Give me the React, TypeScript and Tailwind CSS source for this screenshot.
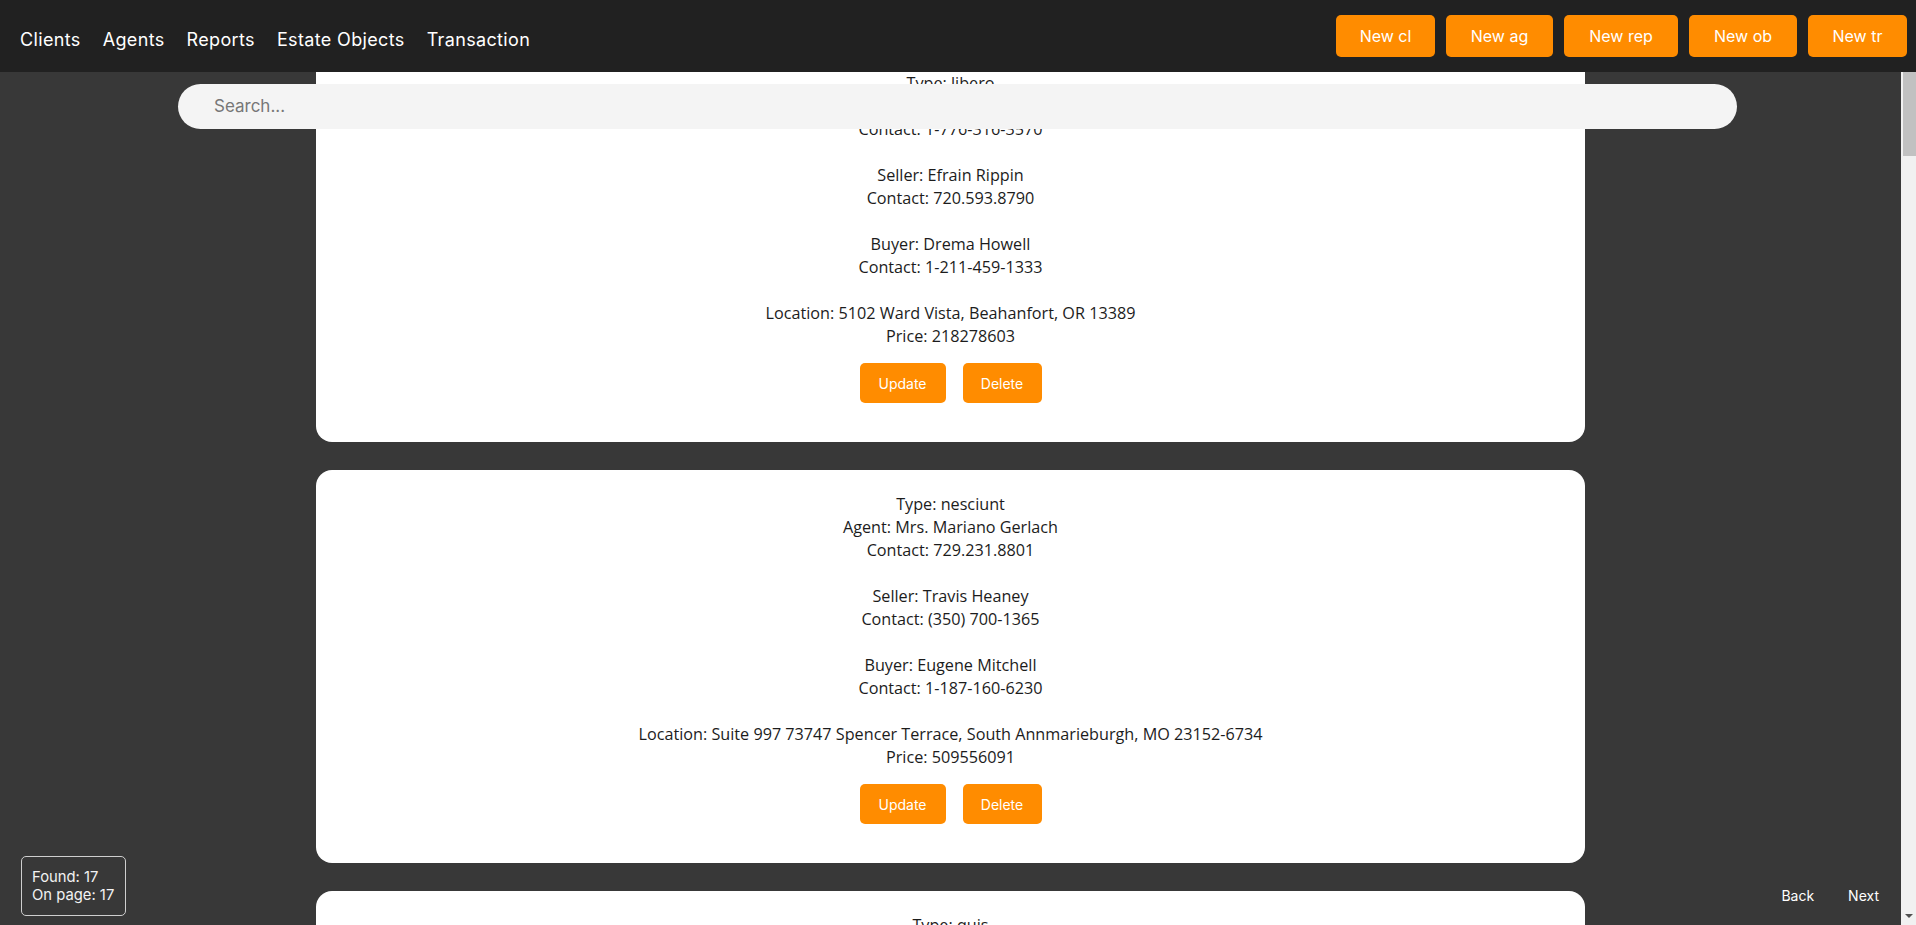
import React, { useLayoutEffect, useRef } from 'react';

type Deal = {
  type: string;
  agent: string;
  agentContact: string;
  seller: string;
  sellerContact: string;
  buyer: string;
  buyerContact: string;
  location: string;
  price: string;
};

const baseDeals: Deal[] = [
  {
    type: 'libero',
    agent: 'Dr. Lonnie Kertzmann',
    agentContact: '1-776-316-3570',
    seller: 'Efrain Rippin',
    sellerContact: '720.593.8790',
    buyer: 'Drema Howell',
    buyerContact: '1-211-459-1333',
    location: '5102 Ward Vista, Beahanfort, OR 13389',
    price: '218278603',
  },
  {
    type: 'nesciunt',
    agent: 'Mrs. Mariano Gerlach',
    agentContact: '729.231.8801',
    seller: 'Travis Heaney',
    sellerContact: '(350) 700-1365',
    buyer: 'Eugene Mitchell',
    buyerContact: '1-187-160-6230',
    location: 'Suite 997 73747 Spencer Terrace, South Annmarieburgh, MO 23152-6734',
    price: '509556091',
  },
  {
    type: 'quis',
    agent: 'Ms. Darcy Lind',
    agentContact: '(615) 872-4410',
    seller: 'Lavern Bode',
    sellerContact: '1-402-118-2297',
    buyer: 'Hollis Kuhn',
    buyerContact: '864.330.5127',
    location: '881 Gleason Mill, Port Sherman, TX 71902',
    price: '347120558',
  },
];

// 17 found, all on one page
const deals: Deal[] = Array.from({ length: 17 }, (_, i) => baseDeals[i % 3]);

const navLinks = ['Clients', 'Agents', 'Reports', 'Estate Objects', 'Transaction'];

const newButtons = [
  { label: 'New cl', w: 'w-[99px]' },
  { label: 'New ag', w: 'w-[107px]' },
  { label: 'New rep', w: 'w-[114px]' },
  { label: 'New ob', w: 'w-[108px]' },
  { label: 'New tr', w: 'w-[99px]' },
];

function DealCard({ deal }: { deal: Deal }) {
  return (
    <div className="bg-white rounded-2xl pt-[23px] pb-[39px] flex flex-col items-center text-center text-[#1c1c1c] text-[16.2px] leading-[23px] font-['Open_Sans',sans-serif]">
      <div>Type: {deal.type}</div>
      <div>Agent: {deal.agent}</div>
      <div>Contact: {deal.agentContact}</div>
      <div className="mt-[23px]">Seller: {deal.seller}</div>
      <div>Contact: {deal.sellerContact}</div>
      <div className="mt-[23px]">Buyer: {deal.buyer}</div>
      <div>Contact: {deal.buyerContact}</div>
      <div className="mt-[23px]">Location: {deal.location}</div>
      <div>Price: {deal.price}</div>
      <div className="flex gap-[17px] mt-[15px] font-['Inter',sans-serif]">
        <button className="w-[86px] h-[40px] rounded-[5px] bg-[#ff8c00] text-white text-[14px]">Update</button>
        <button className="w-[79px] h-[40px] rounded-[5px] bg-[#ff8c00] text-white text-[14px]">Delete</button>
      </div>
    </div>
  );
}

// classic scrollbar look (the headless browser hides the native one)
function ScrollRail() {
  return (
    <div className="w-[15px] h-full bg-[#f1f1f1] flex flex-col">
      <div className="mt-[45px] ml-[2px] h-[111px] bg-[#c1c1c1]" />
      <div className="flex-1" />
      <div className="h-[17px] flex items-center justify-center pb-[2px]">
        <div className="w-0 h-0 border-l-[4px] border-r-[4px] border-t-[4px] border-l-transparent border-r-transparent border-t-[#505050]" />
      </div>
    </div>
  );
}

export default function App() {
  const listRef = useRef<HTMLDivElement>(null);

  useLayoutEffect(() => {
    if (listRef.current) listRef.current.scrollTop = 235;
  }, []);

  return (
    <div className="relative h-screen overflow-hidden bg-[#383838] flex font-['Inter',sans-serif]">
      <div
        ref={listRef}
        className="flex-1 h-full overflow-y-scroll pt-[284px] pb-[28px] [scrollbar-width:none]"
      >
        <div className="w-[1269px] mx-auto flex flex-col gap-[28px]">
          {deals.map((d, i) => (
            <DealCard key={i} deal={d} />
          ))}
        </div>
      </div>
      <ScrollRail />

      {/* top bar */}
      <nav className="absolute top-0 inset-x-0 z-20 h-[72px] bg-[#212121] flex items-center justify-between pl-[20px] pr-[9px]">
        <div className="flex items-center gap-[22px] text-[18px] tracking-[0.35px] text-white pt-[6px]">
          {navLinks.map((l) => (
            <a key={l} className="cursor-pointer">
              {l}
            </a>
          ))}
        </div>
        <div className="flex items-center gap-[11px]">
          {newButtons.map((b) => (
            <button
              key={b.label}
              className={`${b.w} h-[42px] rounded-[5px] bg-[#ff8c00] text-white text-[16px]`}
            >
              {b.label}
            </button>
          ))}
        </div>
      </nav>

      {/* search */}
      <div className="absolute z-10 top-[84px] left-[178px] w-[1559px] h-[45px] rounded-full bg-[#f4f4f4] flex items-center pl-[36px]">
        <input
          placeholder="Search..."
          className="w-full bg-transparent outline-none text-[17px] text-[#333] placeholder:text-[#777]"
        />
      </div>

      {/* counters */}
      <div className="absolute z-10 left-[21px] bottom-[9px] w-[105px] h-[60px] border border-[#cfcfcf] rounded-[5px] px-[10px] flex flex-col justify-center text-[14.8px] leading-[18.5px] text-[#f2f2f2]">
        <span>Found: 17</span>
        <span>On page: 17</span>
      </div>

      {/* pagination */}
      <div className="absolute z-10 right-[37px] bottom-[19px] flex gap-[34px] text-[14px] leading-[20px] text-white">
        <button>Back</button>
        <button>Next</button>
      </div>
    </div>
  );
}
